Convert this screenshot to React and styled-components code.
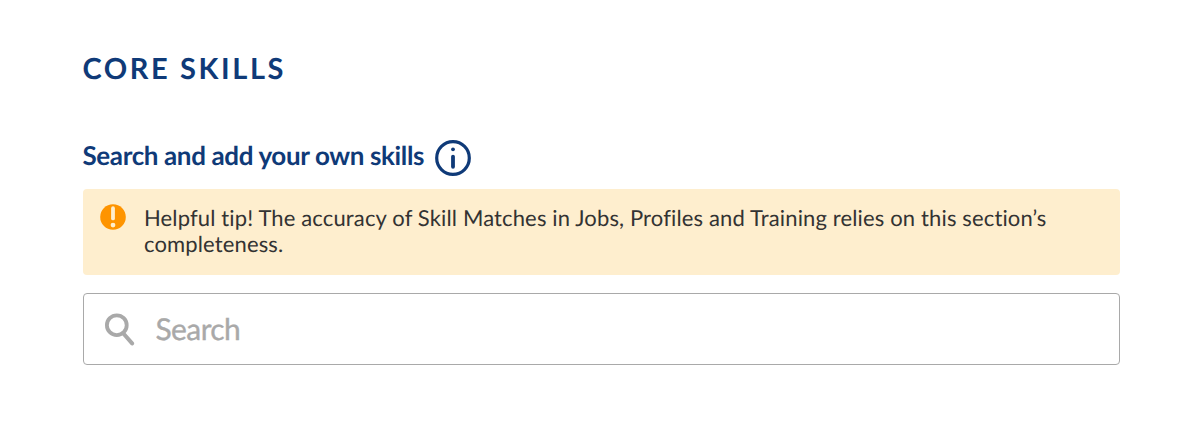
import React from "react";
import styled, { createGlobalStyle } from "styled-components";

const GlobalStyle = createGlobalStyle`
  * { box-sizing: border-box; }
  body {
    margin: 0;
    background: #fff;
    font-family: Lato, sans-serif;
    text-rendering: geometricPrecision;
    -webkit-font-smoothing: antialiased;
  }
`;
const Section = styled.section`
  display: flex;
  flex-direction: column;
  padding: 51px 71px 0 83px;
`;
const Title = styled.h2`
  margin: 0 0 0 -0.5px;
  font-size: 29px;
  line-height: 36px;
  font-weight: 700;
  letter-spacing: 2.6px;
  color: #0f3a78;
`;
const LabelRow = styled.div`
  display: flex;
  align-items: center;
  gap: 11.3px;
  height: 36px;
  margin-top: 53px;
`;
const Label = styled.label`
  margin-left: -0.5px;
  font-size: 26px;
  line-height: 32px;
  font-weight: 700;
  letter-spacing: -0.37px;
  color: #0f3a78;
  padding-bottom: 6px;
`;
const Tip = styled.div`
  display: flex;
  align-items: flex-start;
  gap: 17.6px;
  height: 86px;
  margin-top: 13px;
  padding: 15px 17.4px;
  border-radius: 4px;
  background: #feeece;
`;
const TipText = styled.p`
  margin: 1px 0 0;
  font-size: 22px;
  line-height: 26px;
  letter-spacing: 0.14px;
  color: #333;
`;
const SearchBox = styled.div`
  display: flex;
  align-items: center;
  gap: 20.5px;
  height: 72px;
  margin-top: 18px;
  padding: 0 21px;
  border: 1px solid #a9a9a9;
  border-radius: 4px;
`;
const Input = styled.input`
  flex: 1;
  padding: 0 0 1px;
  border: 0;
  outline: 0;
  background: none;
  font: 400 30px/36px Lato, sans-serif;
  letter-spacing: -0.6px;
  text-rendering: geometricPrecision;
  &::placeholder {
    color: #a9a9a9;
    opacity: 1;
    -webkit-text-stroke: 0.35px #a9a9a9;
  }
`;
const Icon = styled.svg`
  display: block;
  flex: none;
`;

export default function App() {
  return (
    <>
      <GlobalStyle />
      <Section>
        <Title>CORE SKILLS</Title>
        <LabelRow>
          <Label htmlFor="skill-search">Search and add your own skills</Label>
          <Icon width="36" height="36" viewBox="0 0 36 36" fill="none" stroke="#0f3a78">
            <circle cx="18" cy="18" r="16.3" strokeWidth="3.2" />
            <path d="M18 16.6v10.2" strokeWidth="3.8" strokeLinecap="round" />
            <circle cx="18" cy="9.3" r="1.9" fill="#0f3a78" stroke="none" />
          </Icon>
        </LabelRow>
        <Tip>
          <Icon width="26" height="26" viewBox="0 0 26 26">
            <circle cx="13" cy="13" r="12.8" fill="#fe9400" />
            <path d="M13 4.2v10.2" stroke="#feeece" strokeWidth="3.8" strokeLinecap="round" />
            <circle cx="13" cy="21.1" r="2.4" fill="#feeece" />
          </Icon>
          <TipText>Helpful tip! The accuracy of Skill Matches in Jobs, Profiles and Training relies on this section’s completeness.</TipText>
        </Tip>
        <SearchBox>
          <Icon width="30" height="34" viewBox="0 0 30 34" fill="none" stroke="#a9a9a9">
            <circle cx="11.8" cy="13.2" r="9.9" strokeWidth="3.8" />
            <path d="M18.2 21.2l8.9 10.2" strokeWidth="4" strokeLinecap="round" />
          </Icon>
          <Input id="skill-search" placeholder="Search" />
        </SearchBox>
      </Section>
    </>
  );
}
